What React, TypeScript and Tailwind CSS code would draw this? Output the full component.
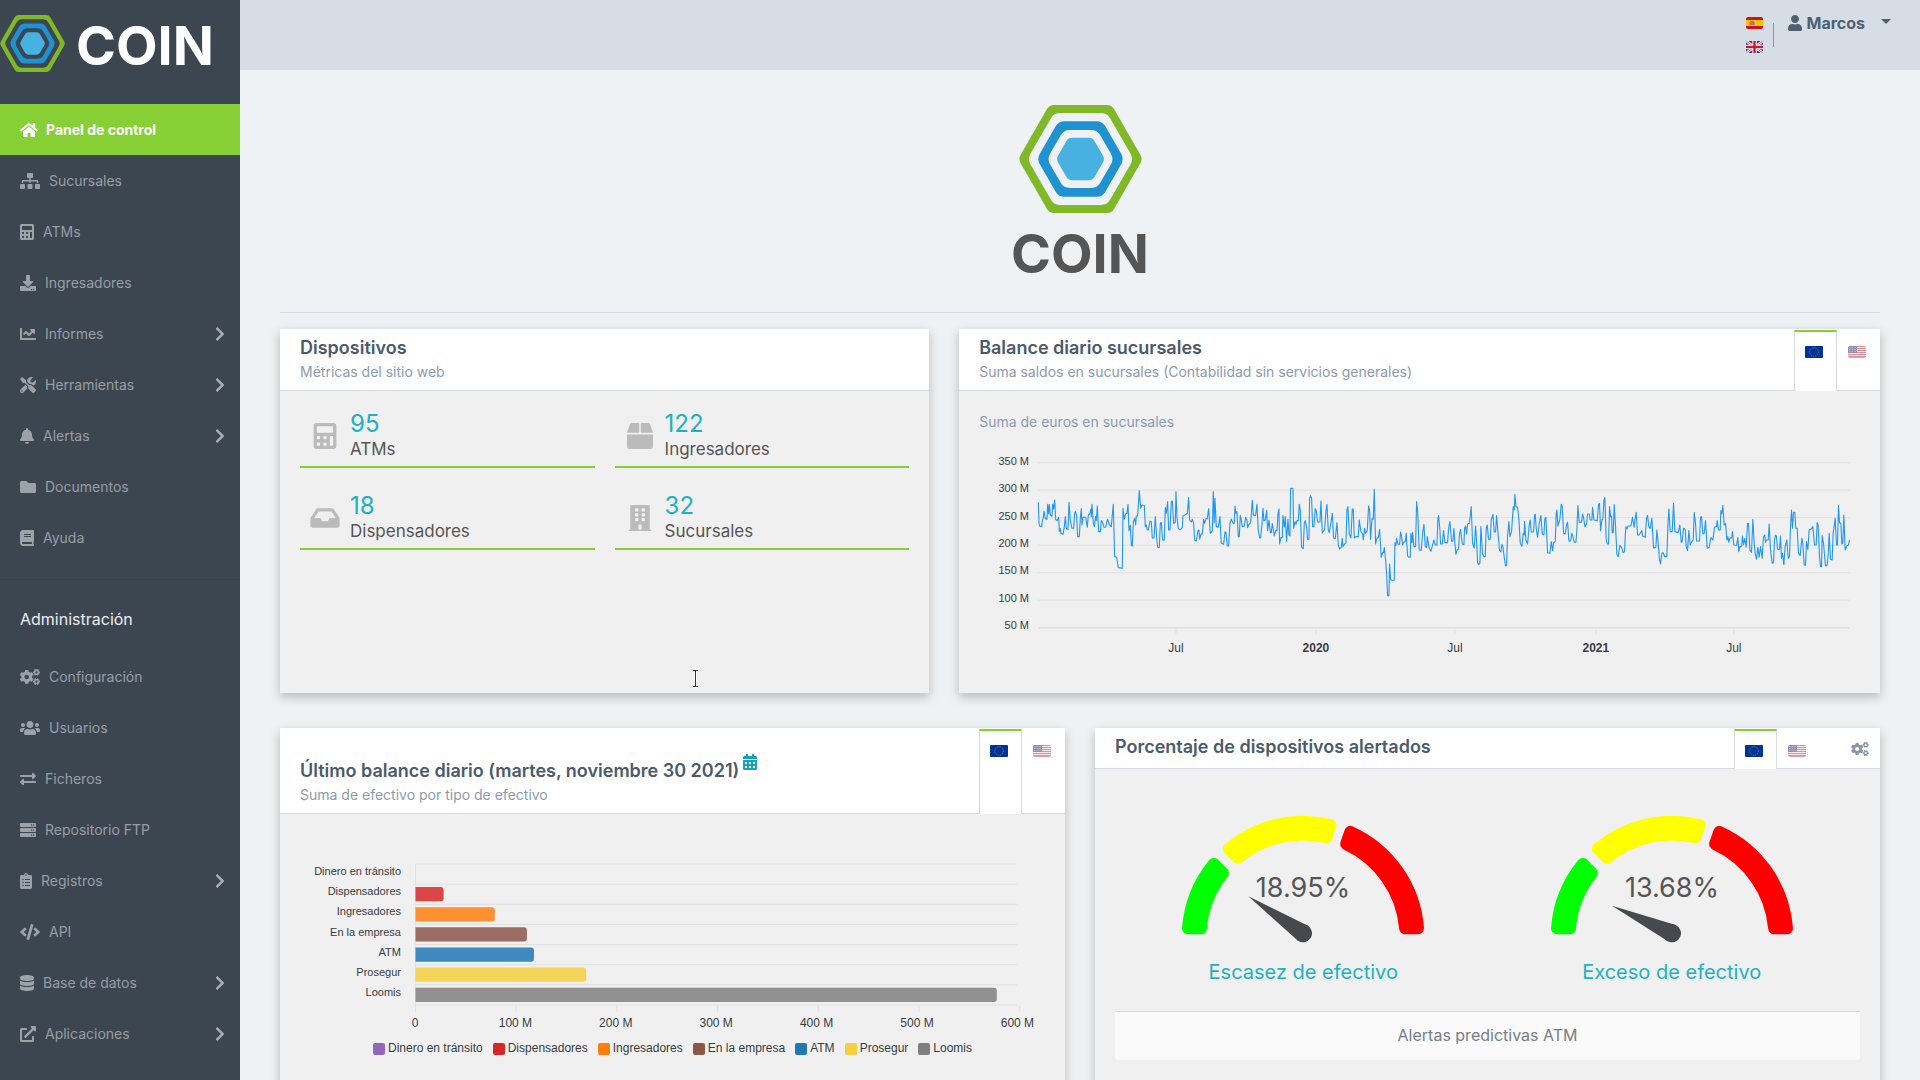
import type { ReactNode } from 'react';
import type { IconType } from 'react-icons';
import {
  FaBell, FaBook, FaBox, FaBuilding, FaCalculator, FaCalendarAlt, FaChartLine,
  FaChevronRight, FaClipboardList, FaCode, FaCogs, FaDatabase, FaDownload, FaExchangeAlt,
  FaExternalLinkAlt, FaFolder, FaHome, FaInbox, FaServer, FaSitemap, FaTools, FaUser, FaUsers,
} from 'react-icons/fa';

type NavItem = { label: string; icon: IconType; size: string; active?: boolean; children?: boolean };

const mainNav: NavItem[] = [
  { label: 'Panel de control', icon: FaHome, size: 'w-[18px]', active: true },
  { label: 'Sucursales', icon: FaSitemap, size: 'w-5' },
  { label: 'ATMs', icon: FaCalculator, size: 'w-[14px]' },
  { label: 'Ingresadores', icon: FaDownload, size: 'w-4' },
  { label: 'Informes', icon: FaChartLine, size: 'w-4', children: true },
  { label: 'Herramientas', icon: FaTools, size: 'w-4', children: true },
  { label: 'Alertas', icon: FaBell, size: 'w-[14px]', children: true },
  { label: 'Documentos', icon: FaFolder, size: 'w-4' },
  { label: 'Ayuda', icon: FaBook, size: 'w-[14px]' },
];

const adminNav: NavItem[] = [
  { label: 'Configuración', icon: FaCogs, size: 'w-5' },
  { label: 'Usuarios', icon: FaUsers, size: 'w-5' },
  { label: 'Ficheros', icon: FaExchangeAlt, size: 'w-4' },
  { label: 'Repositorio FTP', icon: FaServer, size: 'w-4' },
  { label: 'Registros', icon: FaClipboardList, size: 'w-3', children: true },
  { label: 'API', icon: FaCode, size: 'w-5' },
  { label: 'Base de datos', icon: FaDatabase, size: 'w-[14px]', children: true },
  { label: 'Aplicaciones', icon: FaExternalLinkAlt, size: 'w-4', children: true },
];

const stats = [
  { value: 95, label: 'ATMs', icon: FaCalculator },
  { value: 122, label: 'Ingresadores', icon: FaBox },
  { value: 18, label: 'Dispensadores', icon: FaInbox },
  { value: 32, label: 'Sucursales', icon: FaBuilding },
];

const cashTypes = [
  { label: 'Dinero en tránsito', color: '#9467bd', value: 0 },
  { label: 'Dispensadores', color: '#d62728', value: 28 },
  { label: 'Ingresadores', color: '#ff7f0e', value: 79 },
  { label: 'En la empresa', color: '#8c564b', value: 111 },
  { label: 'ATM', color: '#1f77b4', value: 118 },
  { label: 'Prosegur', color: '#f4d03f', value: 170 },
  { label: 'Loomis', color: '#7f7f7f', value: 579 },
];

// Serie diaria, en tercios de píxel
const balanceFirstHalf =
  '265,577 267,640 269,648 275,650 277,632 280,622 282,603 286,626 291,628 293,583 296,612 298,583 301,615 306,619 308,583 311,597 314,570 317,628 321,632 326,622 328,664 331,656 333,670 339,673 343,650 346,620 349,655 354,659 357,577 361,632 366,655 371,655 374,608 377,605 380,618 383,680 388,680 391,625 394,596 396,645 399,622 407,622 412,652 415,615 419,612 423,597 424,620 426,583 430,640 433,650 437,620 439,632 442,588 446,665 451,665 454,632 458,638 462,652 467,652 470,636 473,628 478,645 484,650 487,615 490,583 494,740 500,742 505,773 517,775 519,595 523,628 527,612 531,610 534,583 537,662 541,646 544,706 547,708 550,635 554,625 557,645 559,618 563,618 568,542 572,595 575,586 583,586 586,650 589,645 592,660 595,660 600,633 604,635 607,684 612,684 616,620 620,680 623,712 628,713 631,640 634,637 638,690 643,690 646,593 649,610 653,575 656,660 660,660 664,575 667,573 671,640 676,638 678,545 681,622 685,655 690,660 697,653 699,618 705,615 712,610 716,563 719,630 724,636 727,628 731,640 734,690 739,693 744,662 747,660 749,688 753,672 757,672 761,628 764,640 768,626 772,626 776,596 781,670 787,662 790,545 793,638 795,565 799,650 805,652 810,620 814,700 821,703 825,666 828,666 832,708 836,708 840,640 844,627 849,640 853,640 855,588 858,610 861,605 865,680 868,680 871,616 874,630 877,650 883,648 887,622 891,630 893,653 897,643 902,640 904,615 907,571 910,615 917,617 921,583 925,660 929,684 932,684 936,645 939,595 942,632 946,630 950,601 953,662 957,630 961,668 964,668 967,640 970,660 973,678 977,662 981,662 984,612 987,597 989,702 993,683 997,683 999,617 1003,652 1006,620 1010,694 1014,628 1017,675 1020,678 1022,535 1029,535 1031,655 1035,635 1038,643 1041,632 1045,632 1048,583 1051,600 1055,712 1060,716 1063,640 1066,632 1070,652 1073,688 1077,688 1079,565 1082,557 1085,565 1088,650 1092,650 1096,596 1099,602 1103,636 1110,636 1113,573 1117,668 1124,660 1128,605 1131,583 1135,660 1138,668 1142,645 1147,610 1151,684 1156,686 1161,638 1165,705 1169,717 1174,712 1177,685 1179,710 1184,702 1188,700 1191,600 1194,590 1198,672 1203,684 1207,597 1210,597 1213,684 1218,680 1225,680 1228,630 1233,665 1238,672 1240,690 1244,655 1247,670 1252,662 1256,588 1259,600 1262,688 1266,626 1270,628 1273,538 1277,702 1281,684 1285,684 1289,658 1294,742 1298,728 1301,728 1303,712 1307,750 1310,790 1313,857 1317,858 1319,762 1322,808 1325,811 1333,811 1335,698 1338,706 1340,685 1344,703 1349,703 1352,666 1355,680 1358,705 1361,697 1366,695 1369,670 1373,738 1377,742 1381,742 1383,670 1386,698 1388,668 1392,710 1397,710 1400,575 1403,600 1408,720 1414,721 1418,670 1422,643 1426,710 1430,712 1432,680 1438,715';

const balanceSecondHalf =
  '28,715 33,724 38,705 42,690 46,705 51,705 54,625 56,617 60,660 62,702 67,702 71,662 75,698 83,698 86,655 90,635 95,694 99,694 102,655 105,700 108,733 112,718 116,718 119,670 122,658 127,702 132,704 134,655 137,648 140,672 143,642 148,640 151,618 154,590 158,700 163,714 167,648 170,690 173,758 176,764 180,760 183,650 188,733 192,740 196,740 199,655 202,645 206,688 211,688 214,630 219,613 223,666 227,666 230,617 234,665 239,722 243,726 246,703 249,710 253,742 257,768 260,766 263,678 267,635 270,680 275,665 278,620 280,590 283,600 285,553 288,590 293,592 297,627 301,700 306,709 310,670 313,675 314,634 318,690 323,702 328,645 331,630 334,666 341,666 344,615 346,613 349,655 353,682 358,640 363,617 367,672 372,675 375,625 378,622 383,728 390,730 394,695 398,722 401,698 406,695 409,610 411,600 414,648 420,628 424,583 427,590 431,670 436,672 440,645 443,637 447,693 452,693 456,670 459,680 463,697 468,697 471,660 474,587 478,637 485,637 488,612 491,622 495,650 500,642 503,612 508,612 511,630 516,630 518,592 522,630 532,632 536,583 539,580 542,662 546,630 549,628 552,570 555,563 559,690 562,702 566,702 569,590 572,620 575,618 577,668 580,668 583,584 587,650 591,733 595,740 600,706 605,712 610,728 614,725 616,678 618,650 621,657 625,648 633,648 638,622 643,652 645,632 649,607 653,675 658,675 666,662 668,678 676,682 680,625 683,616 687,650 691,655 696,625 701,714 708,712 711,660 715,700 719,750 722,762 726,730 730,728 734,740 741,740 744,650 747,597 751,665 757,665 761,580 765,665 775,668 780,645 784,697 787,695 791,655 796,658 799,710 803,722 807,662 811,705 816,695 820,690 823,608 827,640 830,693 839,693 842,622 845,620 849,672 853,670 857,632 862,715 868,712 873,683 879,690 884,652 890,650 892,632 896,660 901,660 903,602 906,612 909,587 913,645 917,640 921,690 924,680 927,697 930,684 935,684 938,665 942,705 950,706 954,683 957,725 960,710 965,710 968,678 971,705 975,685 979,712 983,640 986,640 990,720 995,727 999,628 1003,700 1006,730 1010,748 1014,712 1018,742 1022,710 1027,745 1031,680 1035,675 1037,697 1040,690 1045,690 1048,642 1052,720 1057,760 1061,758 1064,690 1067,675 1070,680 1073,718 1079,718 1082,678 1085,745 1088,730 1092,764 1096,710 1101,690 1105,745 1109,740 1112,650 1115,600 1118,655 1121,607 1125,607 1128,655 1132,655 1136,730 1141,737 1146,685 1149,700 1153,765 1157,766 1160,695 1164,718 1168,660 1173,658 1179,650 1184,705 1189,705 1192,638 1195,645 1199,740 1202,770 1205,770 1207,677 1211,700 1217,768 1222,765 1225,735 1228,670 1232,748 1237,750 1240,670 1246,625 1250,705 1253,705 1256,587 1259,638 1263,640 1266,702 1269,700 1272,615 1276,720 1281,708 1286,705 1289,690';

function roundedHex(r: number, cut: number) {
  const pts = [0, 1, 2, 3, 4, 5].map((i) => [r * Math.cos((i * Math.PI) / 3), r * Math.sin((i * Math.PI) / 3)]);
  const k = cut / r;
  const parts = pts.map(([x, y], i) => {
    const [px, py] = pts[(i + 5) % 6];
    const [nx, ny] = pts[(i + 1) % 6];
    const a = `${x + (px - x) * k} ${y + (py - y) * k}`;
    const b = `${x + (nx - x) * k} ${y + (ny - y) * k}`;
    return `${i ? 'L' : 'M'}${a}Q${x} ${y} ${b}`;
  });
  return parts.join('') + 'Z';
}

function HexLogo({ className }: { className: string }) {
  return (
    <svg viewBox="-61.5 -54 123 108" className={className} aria-hidden="true">
      <path d={roundedHex(62.35, 5) + roundedHex(53.1, 6)} fillRule="evenodd" fill="#80b927" />
      <path d={roundedHex(43.7, 6) + roundedHex(33.5, 6)} fillRule="evenodd" fill="#1f92d2" />
      <path d={roundedHex(24.4, 4)} fill="#47b1e1" />
    </svg>
  );
}

function SpainFlag() {
  return (
    <svg viewBox="0 0 17 12" className="h-3 w-[17px] rounded-xs" role="img" aria-label="Español">
      <rect width="17" height="12" fill="#d0121f" />
      <rect y="3" width="17" height="6" fill="#ffc400" />
      <rect x="4" y="4" width="4" height="4" fill="#c8705a" />
      <rect x="3" y="5" width="1" height="3" fill="#b09080" />
      <rect x="8" y="5" width="1" height="3" fill="#b09080" />
    </svg>
  );
}

function UkFlag() {
  return (
    <svg viewBox="0 0 17 12" className="h-3 w-[17px] rounded-xs" role="img" aria-label="English">
      <rect width="17" height="12" fill="#22408c" />
      <path d="M0 0L17 12M17 0L0 12" stroke="#fff" strokeWidth="2.6" />
      <path d="M0 0L17 12M17 0L0 12" stroke="#d8405a" strokeWidth="0.9" />
      <path d="M8.5 0V12M0 6H17" stroke="#fff" strokeWidth="4.4" />
      <path d="M8.5 0V12M0 6H17" stroke="#d8122d" strokeWidth="2.4" />
    </svg>
  );
}

function EuFlag() {
  return (
    <svg viewBox="0 0 18 12" className="h-3 w-[18px] rounded-[1px]" role="img" aria-label="Euros">
      <rect width="18" height="12" fill="#039" />
      <circle cx="9" cy="6" r="4.3" fill="none" stroke="#7c8557" strokeWidth="0.9" strokeDasharray="1.2 1.05" />
    </svg>
  );
}

function UsFlag() {
  return (
    <svg viewBox="0 0 18 12" className="h-3 w-[18px] rounded-xs opacity-50" role="img" aria-label="Dólares">
      <rect width="18" height="12" fill="#f4d4d8" />
      {[0, 2, 4, 6, 8, 10].map((y) => (
        <rect key={y} y={y} width="18" height="1" fill="#bd1f38" />
      ))}
      <rect y="11" width="18" height="1" fill="#c94a5c" />
      <rect width="9" height="7" fill="#22225f" />
      <path d="M1 1.5H9M1 3.5H9M1 5.5H9" stroke="#9a9ac0" strokeWidth="0.8" strokeDasharray="0.8 0.8" />
    </svg>
  );
}

function NavLink({ item }: { item: NavItem }) {
  const Icon = item.icon;
  return (
    <a
      href="#"
      className={
        item.active
          ? 'flex h-[51px] items-center gap-2 bg-[#86d036] px-5 text-sm font-bold text-white'
          : 'flex h-[51px] items-center gap-[9px] pr-[15px] pl-5 text-sm text-[#989ea4]'
      }
    >
      <Icon className={`${item.size} h-4 ${item.active ? 'text-white' : 'text-[#9da2a8]'}`} />
      <span>{item.label}</span>
      {item.children && <FaChevronRight className="ml-auto h-4 w-[10px] text-[#a9aeb3]" />}
    </a>
  );
}

function Sidebar() {
  return (
    <aside className="w-60 shrink-0 overflow-hidden bg-[#3c4651]">
      <a href="#" className="flex h-[104px] items-start pt-[15px]">
        <HexLogo className="h-[57px] w-[65px]" />
        <span className="ml-[11px] text-[54px] leading-[62px] font-bold text-white">COIN</span>
      </a>
      <nav>
        {mainNav.map((item) => (
          <NavLink key={item.label} item={item} />
        ))}
        <hr className="my-4 border-[#35404b]" />
        <h2 className="h-[55px] px-5 pt-[11px] text-base leading-6 text-[#ebedef]">Administración</h2>
        {adminNav.map((item) => (
          <NavLink key={item.label} item={item} />
        ))}
      </nav>
    </aside>
  );
}

function Topbar() {
  return (
    <header className="flex h-[70px] shrink-0 items-start justify-end bg-[#d6dde4] pr-[29px]">
      <div className="mt-[17px] flex flex-col gap-3">
        <button type="button"><SpainFlag /></button>
        <button type="button"><UkFlag /></button>
      </div>
      <div className="mt-[23px] ml-[10px] h-6 w-px bg-[#8a99a9]" />
      <button type="button" className="mt-[11px] ml-[14px] flex h-6 items-center text-base font-bold text-[#4f6073]">
        <FaUser className="h-4 w-[14px]" />
        <span className="ml-1">Marcos</span>
        <span className="mb-[3px] ml-4 border-x-[5px] border-t-[5px] border-x-transparent border-t-[#4f6073]" />
      </button>
    </header>
  );
}

function CurrencyTabs({ children }: { children?: ReactNode }) {
  return (
    <div className="-mb-px flex self-stretch pt-px">
      <button type="button" className="flex w-[43px] items-start border-x border-t-2 border-x-[#d8dbe0] border-t-[#86d036] bg-white pt-[14px] pl-[10px]">
        <EuFlag />
      </button>
      <button type="button" className="mb-px flex w-[43px] items-start pt-4 pl-[11px]">
        <UsFlag />
      </button>
      {children}
    </div>
  );
}

function Card({ title, subtitle, tabs, headerClass, className, children }: {
  title: ReactNode;
  subtitle?: string;
  tabs?: ReactNode;
  headerClass: string;
  className: string;
  children: ReactNode;
}) {
  return (
    <section className={`${className} flex flex-col bg-[#f0f0f0] shadow-[0_4px_10px_rgba(0,0,0,0.24)]`}>
      <div className="flex justify-between border-b border-[#d3dbe6] bg-white">
        <div className={`${headerClass} pl-5`}>
          <h3 className="text-lg leading-6 font-semibold text-[#4a5a6e]">{title}</h3>
          {subtitle && <p className="text-sm leading-6 text-[#8c9bad]">{subtitle}</p>}
        </div>
        {tabs}
      </div>
      <div className="relative flex-1 p-5">{children}</div>
    </section>
  );
}

function DeviceStats() {
  return (
    <div className="grid grid-cols-2 gap-x-5 gap-y-[25px]">
      {stats.map(({ value, label, icon: Icon }) => (
        <div key={label} className="flex items-start border-b-2 border-[#86d036] pb-[3px]">
          <div className="flex w-[50px] justify-center pt-3">
            <Icon className="h-[26px] w-[30px] text-[#bbb]" />
          </div>
          <div>
            <p className="text-2xl leading-[25px] text-[#20b2be]">{value}</p>
            <p className="text-[17px] leading-[27px] text-[#555]">{label}</p>
          </div>
        </div>
      ))}
    </div>
  );
}

// Puntero de texto
function TextCursor() {
  return (
    <svg viewBox="0 0 7 19" className="absolute top-[278px] left-[412px] h-[19px] w-[7px]" aria-hidden="true">
      <path d="M1 1.5H6M3.5 1.5V17.5M1 17.5H6" stroke="#fff" strokeWidth="3" />
      <path d="M1 1.5H6M3.5 1.5V17.5M1 17.5H6" stroke="#333" strokeWidth="1" />
    </svg>
  );
}

const yearTicks = [
  { x: 197, label: 'Jul' },
  { x: 337, label: '2020', bold: true },
  { x: 476, label: 'Jul' },
  { x: 617, label: '2021', bold: true },
  { x: 755, label: 'Jul' },
];

function BalanceChart() {
  return (
    <svg viewBox="0 0 881 230" className="w-full font-['Liberation_Sans',Arial,sans-serif]" fill="#373d3f">
      {[350, 300, 250, 200, 150, 100, 50].map((m, i) => (
        <g key={m}>
          <line x1="59" x2="871" y1={29.7 + i * 27.5} y2={29.7 + i * 27.5} stroke="#e0e0e0" />
          <text x="50" y={Math.round(32 + i * 27.3)} textAnchor="end" className="text-[11px]">{m} M</text>
        </g>
      ))}
      <line x1="59" x2="871" y1="195" y2="195" stroke="#e0e0e0" />
      {yearTicks.map((t) => (
        <g key={t.x}>
          <line x1={t.x} x2={t.x} y1="196" y2="201" stroke="#e0e0e0" />
          <text x={t.x} y="219" textAnchor="middle" className={t.bold ? 'text-xs font-bold' : 'text-xs'}>{t.label}</text>
        </g>
      ))}
      <g transform="translate(-29 -123) scale(0.33333)" fill="none" stroke="#2196f3" strokeWidth="3.3" strokeLinejoin="round">
        <polyline points={balanceFirstHalf} />
        <polyline points={balanceSecondHalf} transform="translate(1410 0)" />
      </g>
    </svg>
  );
}

function CashBarChart() {
  return (
    <svg viewBox="0 0 745 198" className="w-full font-['Liberation_Sans',Arial,sans-serif]" fill="#373d3f">
      {[0, 1, 2, 3, 4, 5, 6, 7].map((i) => (
        <line key={i} x1="115" x2="717" y1={30 + i * 20.14} y2={30 + i * 20.14} stroke="#e0e0e0" />
      ))}
      <line x1="115.5" x2="115.5" y1="30" y2="172" stroke="#e0e0e0" />
      {cashTypes.map((c, i) => {
        const top = 32.9 + i * 20.14;
        const end = 115.5 + c.value * 1.004;
        return (
          <g key={c.label}>
            <text x="101" y={Math.round(41 + i * 20.2)} textAnchor="end" className="text-[11px]">{c.label}</text>
            {c.value > 0 && (
              <path
                d={`M115.5 ${top}H${end - 3}Q${end} ${top} ${end} ${top + 3}V${top + 11.2}Q${end} ${top + 14.2} ${end - 3} ${top + 14.2}H115.5Z`}
                fill={c.color}
                fillOpacity="0.85"
              />
            )}
          </g>
        );
      })}
      {[0, 100, 200, 300, 400, 500, 600].map((v) => (
        <g key={v}>
          <line x1={115.5 + v * 1.007} x2={115.5 + v * 1.007} y1="172" y2="178" stroke="#e0e0e0" />
          <text x={115 + v * 1.004} y="193" textAnchor="middle" className="text-xs">{v ? `${v} M` : '0'}</text>
        </g>
      ))}
    </svg>
  );
}

// Sector del medidor; los ángulos se miden desde la izquierda en grados
function gaugeSector(from: number, padFrom: number, to: number, padTo: number) {
  const point = (r: number, deg: number, pad: number) => {
    const a = (deg * Math.PI) / 180 + Math.asin(pad / r);
    return `${-r * Math.cos(a)} ${-r * Math.sin(a)}`;
  };
  const corner = 6;
  const outer = 115.3;
  const inner = 102.5;
  return [
    `M${point(outer, from, padFrom + corner)}`,
    `A${outer} ${outer} 0 0 1 ${point(outer, to, -padTo - corner)}`,
    `L${point(inner, to, -padTo - corner)}`,
    `A${inner} ${inner} 0 0 0 ${point(inner, from, padFrom + corner)}Z`,
  ].join('');
}

const gaugeSectors = [
  { color: '#00ff00', d: gaugeSector(0, 2.7, 44.6, 4.7) },
  { color: '#ffff00', d: gaugeSector(44.6, 4.7, 109, 4.5) },
  { color: '#ff0000', d: gaugeSector(109, 4.5, 180, 2.7) },
];

function Gauge({ percent, label }: { percent: number; label: string }) {
  return (
    <figure className="flex flex-col items-center pt-[22px]">
      <svg viewBox="-125 -126 250 134" className="h-[134px] w-[250px]" role="img" aria-label={label}>
        {gaugeSectors.map((s) => (
          <path key={s.color} d={s.d} fill={s.color} stroke={s.color} strokeWidth="12" strokeLinejoin="round" />
        ))}
        <g transform={`translate(0 -3.7) rotate(${percent * 1.8})`} fill="#464a4f">
          <circle r="9" />
          <path d="M-66 0L0 -9V9Z" />
        </g>
        <text y="-40" textAnchor="middle" fill="#555" className="text-[27px]">{percent}%</text>
      </svg>
      <figcaption className="mt-[14px] text-xl leading-[26px] text-[#20b2be]">{label}</figcaption>
    </figure>
  );
}

export default function App() {
  return (
    <div className="flex h-screen overflow-hidden bg-[#eef2f5] font-['Inter',sans-serif] text-[#555]">
      <Sidebar />
      <div className="flex min-w-0 flex-1 flex-col">
        <Topbar />
        <main className="min-h-0 flex-1 overflow-y-auto px-10 pb-10 [scrollbar-width:none]">
          <div className="flex flex-col items-center border-b border-[#d5dbe1] pt-[35px] pb-6">
            <HexLogo className="h-[108px] w-[123px]" />
            <h1 className="mt-[7px] text-[54px] leading-[68px] font-bold text-[#555]">COIN</h1>
          </div>

          <div className="mt-4 grid grid-cols-12 gap-x-[30px] gap-y-[35px]">
            <Card title="Dispositivos" subtitle="Métricas del sitio web" headerClass="pt-[7px] pb-[6px]" className="col-span-5 min-h-[364px]">
              <DeviceStats />
              <TextCursor />
            </Card>

            <Card
              title="Balance diario sucursales"
              subtitle="Suma saldos en sucursales (Contabilidad sin servicios generales)"
              tabs={<CurrencyTabs />}
              headerClass="pt-[7px] pb-[6px]"
              className="col-span-7"
            >
              <p className="text-sm leading-[22px] text-[#8c9bad]">Suma de euros en sucursales</p>
              <BalanceChart />
            </Card>

            <Card
              title={
                <>
                  Último balance diario (martes, noviembre 30 2021)
                  <button type="button" aria-label="Elegir fecha" className="ml-1 align-super">
                    <FaCalendarAlt className="h-4 w-[14px] text-[#17a2b8]" />
                  </button>
                </>
              }
              subtitle="Suma de efectivo por tipo de efectivo"
              tabs={<CurrencyTabs />}
              headerClass="flex flex-col justify-end pt-[26px] pb-[6px]"
              className="col-span-6 min-h-[420px]"
            >
              <CashBarChart />
              <ul className="mt-[8px] flex justify-center gap-[10px] font-['Liberation_Sans',Arial,sans-serif] text-xs text-[#373d3f]">
                {cashTypes.map((c) => (
                  <li key={c.label} className="flex items-center gap-[3px]">
                    <span className="mt-[2px] size-3 rounded-xs" style={{ backgroundColor: c.color }} />
                    {c.label}
                  </li>
                ))}
              </ul>
            </Card>

            <Card
              title="Porcentaje de dispositivos alertados"
              tabs={
                <CurrencyTabs>
                  <button type="button" aria-label="Configurar" className="mb-px flex w-[60px] items-start justify-end pt-[13px] pr-[11px] text-[#8896a5]">
                    <FaCogs className="h-[14px] w-[18px]" />
                  </button>
                </CurrencyTabs>
              }
              headerClass="pt-[7px] pb-[9px]"
              className="col-span-6"
            >
              <div className="grid grid-cols-2 px-1">
                <Gauge percent={18.95} label="Escasez de efectivo" />
                <Gauge percent={13.68} label="Exceso de efectivo" />
              </div>
              <div className="mt-[26px] rounded-b-sm border-t border-[#d5d8da] bg-[#fafafa] pt-[11px] pb-[13px] text-center text-base leading-6 text-[#768089]">
                Alertas predictivas ATM
              </div>
            </Card>
          </div>
        </main>
      </div>
    </div>
  );
}
